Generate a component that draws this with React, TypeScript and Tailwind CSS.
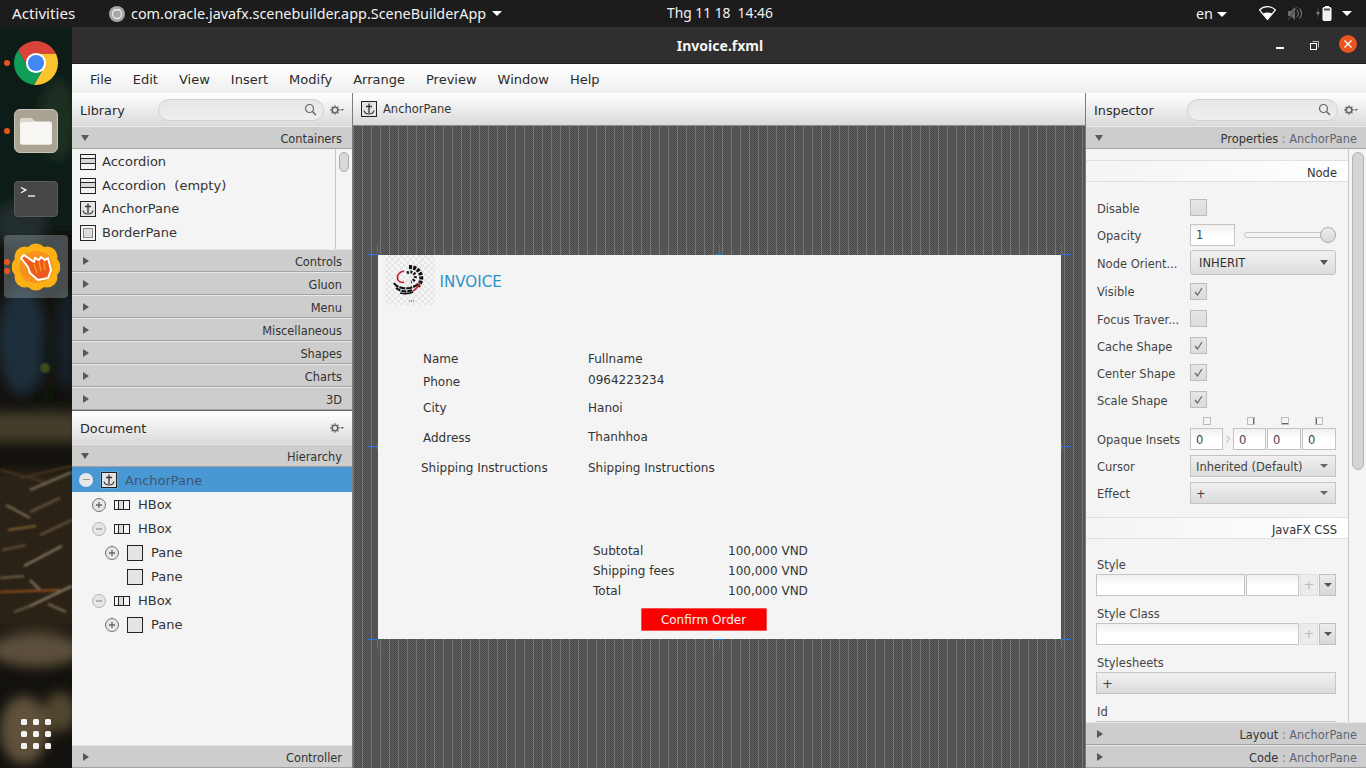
import type { ReactNode } from 'react';

const UI_FONT = "font-['DejaVu_Sans',sans-serif]";
const SHELL_FONT = "font-['Noto_Sans',sans-serif]";

function ChromeLogo() {
  return (
    <svg width="44" height="44" viewBox="0 0 48 48">
      <defs>
        <clipPath id="chromeClip">
          <circle cx="24" cy="24" r="24" />
        </clipPath>
      </defs>
      <g clipPath="url(#chromeClip)">
        <polygon points="24,24 24,14 60,14 60,-10 -10,-10 0.34,3.02 15.34,29" fill="#d9433a" />
        <polygon points="24,24 32.66,29 17.66,55 60,60 60,14 24,14" fill="#fbc42f" />
        <polygon points="24,24 15.34,29 0.34,3.02 -10,-10 -10,60 17.66,55 32.66,29" fill="#109d58" />
      </g>
      <circle cx="24" cy="24" r="11" fill="#fff" />
      <circle cx="24" cy="24" r="8.8" fill="#4386f5" />
    </svg>
  );
}

function FilesIcon() {
  return (
    <div className="flex h-[44px] w-[44px] items-center justify-center rounded-[6px] border border-[#c9c5b6] bg-[#a8a393]">
      <svg width="34" height="30" viewBox="0 0 32 28">
        <path d="M1 4a2 2 0 0 1 2-2h9l3 3h14a2 2 0 0 1 2 2v18a2 2 0 0 1-2 2H3a2 2 0 0 1-2-2z" fill="#f7f6f3" />
        <path d="M1 4a2 2 0 0 1 2-2h9l3 3-14 1z" fill="#d9d6cb" />
      </svg>
    </div>
  );
}

function TerminalIcon() {
  return (
    <div className="h-[36px] w-[44px] rounded-[4px] border border-[#5c5c5c] bg-[#474747] pl-[5px] pt-[4px]">
      <svg width="16" height="12" viewBox="0 0 16 12">
        <path d="M1 1.5l5 2.6-5 2.6" fill="none" stroke="#fff" strokeWidth="1.2" />
        <path d="M8 10h7" stroke="#fff" strokeWidth="1.3" />
      </svg>
    </div>
  );
}

function SceneBuilderLogo() {
  const lobes = [
    [24, 11],
    [35, 14],
    [38, 24],
    [35, 34],
    [24, 37],
    [13, 34],
    [10, 24],
    [13, 14],
  ];
  return (
    <svg width="48" height="48" viewBox="0 0 48 48">
      {lobes.map(([x, y], i) => (
        <circle key={i} cx={x} cy={y} r="10.500" fill="#fbb116" />
      ))}
      {lobes.map(([x, y], i) => (
        <circle key={i} cx={(x + 24) / 2} cy={(y + 24) / 2} r="10" fill="#f78f20" opacity="0.75" />
      ))}
      <path
        d="M9 15l3-3 10 7 1-4 4 2 2-3 4 3 3-2 3 12-3 8-10 2-8-7-2-6z"
        fill="#ee5a1e"
        stroke="#fff"
        strokeWidth="2"
        strokeLinejoin="round"
      />
      <path d="M22 21l3 9M27 19l2 9M32 18l1 9" stroke="#f9a01c" strokeWidth="1.300" />
    </svg>
  );
}

function Wallpaper() {
  const straws = [
    [0, 470, 45, 482, '#4b3a24'],
    [20, 478, 72, 466, '#4a3a24'],
    [30, 490, 72, 472, '#8a7c62'],
    [6, 505, 30, 518, '#8d7f62'],
    [30, 512, 60, 498, '#6e604a'],
    [8, 530, 36, 526, '#8a6c36'],
    [40, 535, 72, 520, '#6d5c42'],
    [2, 550, 26, 545, '#6a5a40'],
    [24, 566, 62, 546, '#a0937a'],
    [0, 578, 24, 576, '#7a6a50'],
    [30, 580, 40, 590, '#8f8268'],
    [0, 592, 60, 590, '#a0521e'],
    [30, 606, 72, 586, '#9a8c72'],
    [48, 604, 66, 612, '#7f7158'],
    [14, 612, 30, 606, '#6f624c'],
  ];
  return (
    <svg className="absolute inset-0" width="72" height="741" viewBox="0 27 72 741">
      <defs>
        <filter id="wallBlur">
          <feGaussianBlur stdDeviation="6" />
        </filter>
        <filter id="strawBlur">
          <feGaussianBlur stdDeviation="1.100" />
        </filter>
      </defs>
      <rect x="0" y="27" width="72" height="741" fill="#13110d" />
      <g filter="url(#wallBlur)">
        <rect x="-10" y="20" width="90" height="210" fill="#101d15" />
        <ellipse cx="58" cy="120" rx="18" ry="40" fill="#1c2d22" />
        <ellipse cx="20" cy="225" rx="26" ry="22" fill="#232f2e" />
        <ellipse cx="22" cy="340" rx="24" ry="55" fill="#1d2d3a" />
        <ellipse cx="66" cy="340" rx="10" ry="50" fill="#162229" />
        <ellipse cx="46" cy="370" rx="5" ry="40" fill="#0e1510" />
        <rect x="-10" y="412" width="90" height="30" fill="#453c2c" />
        <rect x="-10" y="470" width="90" height="160" fill="#2a2114" />
        <ellipse cx="36" cy="650" rx="46" ry="17" fill="#5c503a" />
        <ellipse cx="24" cy="730" rx="24" ry="34" fill="#5e513a" />
        <ellipse cx="60" cy="712" rx="16" ry="20" fill="#51472f" />
      </g>
      <circle cx="45" cy="368" r="5" fill="#3c4d1e" filter="url(#strawBlur)" />
      <g filter="url(#strawBlur)" opacity="0.75">
        {straws.map(([x1, y1, x2, y2, c], i) => (
          <line key={i} x1={x1} y1={y1} x2={x2} y2={y2} stroke={c as string} strokeWidth="2.500" />
        ))}
      </g>
    </svg>
  );
}

function Dock() {
  return (
    <div className="relative h-full w-[72px] shrink-0 overflow-hidden">
      <Wallpaper />
      <div className="relative flex h-full flex-col items-center pt-[14px]">
        <ChromeLogo />
        <div className="mt-[24px]">
          <FilesIcon />
        </div>
        <div className="mt-[28px]">
          <TerminalIcon />
        </div>
        <div className="mt-[18px] flex h-[63px] w-[64px] items-center justify-center rounded-[4px] bg-[#8a9aa0]/45">
          <SceneBuilderLogo />
        </div>
        <div className="mt-[421px] grid grid-cols-3 gap-[6px]">
          {Array.from({ length: 9 }).map((_, i) => (
            <div key={i} className="h-[6px] w-[6px] rounded-[1.5px] bg-[#f4f4f4]" />
          ))}
        </div>
      </div>
      <div className="absolute left-[4px] top-[33px] h-[6px] w-[6px] rounded-full bg-[#e95420]" />
      <div className="absolute left-[4px] top-[101px] h-[6px] w-[6px] rounded-full bg-[#e95420]" />
      <div className="absolute left-[4px] top-[232px] h-[6px] w-[6px] rounded-full bg-[#e95420]" />
      <div className="absolute left-[4px] top-[241px] h-[6px] w-[6px] rounded-full bg-[#e95420]" />
    </div>
  );
}

function Caret({ className = 'border-t-white' }: { className?: string }) {
  return <span className={`inline-block h-0 w-0 border-x-[5px] border-t-[5px] border-x-transparent ${className}`} />;
}

function TopBar() {
  return (
    <div className={`relative flex h-[27px] shrink-0 items-center bg-[#1c1c1c] text-[14.400px] text-[#f2f2f2] ${SHELL_FONT}`}>
      <span className="ml-[12px] w-[63px] whitespace-nowrap text-[15.200px]">Activities</span>
      <svg className="ml-[34px]" width="16" height="16" viewBox="0 0 16 16">
        <circle cx="8" cy="8" r="8" fill="#a6a6a6" />
        <circle cx="8" cy="8" r="4.5" fill="none" stroke="#e8e8e8" strokeWidth="1.3" />
        <path d="M5 3l2 2M11 3L9 5" stroke="#e8e8e8" strokeWidth="1" />
      </svg>
      <span className="ml-[6px]">com.oracle.javafx.scenebuilder.app.SceneBuilderApp</span>
      <Caret className="ml-[6px] border-t-white" />
      <span className="absolute left-[667px] text-[13.800px]">Thg 11 18&nbsp;&nbsp;14:46</span>
      <span className="absolute left-[1196px]">en</span>
      <Caret className="absolute left-[1217px] top-[12px] border-t-white" />
      <svg className="absolute left-[1259px] top-[6px]" width="17" height="14" viewBox="0 0 17 14">
        <path d="M8.5 13.5L.5 4C5-.4 12-.4 16.5 4z" fill="none" stroke="#fff" strokeWidth="1.2" />
        <path d="M8.5 13L4 7.6c2.6-1.6 6.4-1.6 9 0z" fill="#fff" />
      </svg>
      <svg className="absolute left-[1287px] top-[6px]" width="16" height="15" viewBox="0 0 16 15">
        <path d="M1 5h3l4-4v13l-4-4H1z" fill="#6c6c6c" />
        <path d="M10 4c1.5 2 1.5 5 0 7M12.5 2.5c2.500 3 2.500 7 0 10" fill="none" stroke="#6c6c6c" strokeWidth="1.2" />
        <path d="M1 14L10 1" stroke="#4a4a4a" strokeWidth="1.2" />
      </svg>
      <svg className="absolute left-[1315px] top-[5px]" width="17" height="16" viewBox="0 0 17 16">
        <path d="M4 3L1 9h2l-1 4 3-6H3z" fill="#7a7a7a" />
        <rect x="8" y="2.500" width="8" height="13" rx="1" fill="#f2f2f2" stroke="#fff" />
        <rect x="10" y="1" width="4" height="2" fill="#fff" />
        <rect x="9" y="3.500" width="6" height="2" fill="#555" />
      </svg>
      <Caret className="absolute left-[1342px] top-[11px] border-t-white" />
    </div>
  );
}

function TitleBar() {
  return (
    <div className={`relative flex h-[37px] shrink-0 items-center justify-center border-b border-[#1f1e1e] bg-[#302e2e] text-[14px] font-bold text-[#f5f5f5] ${SHELL_FONT}`}>
      <span className="ml-[2px]">Invoice.fxml</span>
      <div className="absolute left-[1204px] top-[20px] h-[1.500px] w-[8px] bg-white" />
      <svg className="absolute left-[1238px] top-[14px]" width="9" height="9" viewBox="0 0 9 9">
        <path d="M2.500 .5h6v6" fill="none" stroke="#bbb" />
        <rect x=".5" y="2.500" width="6" height="6" fill="none" stroke="#fff" />
      </svg>
      <svg className="absolute left-[1267px] top-[8px]" width="18" height="18" viewBox="0 0 18 18">
        <circle cx="9" cy="9" r="9" fill="#e95420" />
        <path d="M5.500 5.500l7 7M12.500 5.500l-7 7" stroke="#fff" strokeWidth="1.300" />
      </svg>
    </div>
  );
}

function MenuBar() {
  const items = ['File', 'Edit', 'View', 'Insert', 'Modify', 'Arrange', 'Preview', 'Window', 'Help'];
  return (
    <div className="flex h-[29px] shrink-0 items-center gap-[21px] bg-linear-to-b from-white to-[#efefef] pl-[18px] pt-[2px] text-[13px] text-[#2b2b2b]">
      {items.map((m) => (
        <span key={m}>{m}</span>
      ))}
    </div>
  );
}

function SearchField({ className }: { className: string }) {
  return (
    <div className={`flex h-[22px] items-center justify-end rounded-full border border-[#d2d2d2] bg-linear-to-b from-[#e6e6e6] to-[#efefef] pr-[6px] ${className}`}>
      <svg width="13" height="13" viewBox="0 0 13 13">
        <circle cx="5.500" cy="5.500" r="4" fill="none" stroke="#666" strokeWidth="1.200" />
        <path d="M8.500 8.500l3.500 3.500" stroke="#666" strokeWidth="1.500" />
      </svg>
    </div>
  );
}

function Gear() {
  return (
    <svg width="14" height="10" viewBox="0 0 14 10">
      <circle cx="5" cy="5" r="2.800" fill="none" stroke="#666" strokeWidth="1.600" />
      <path d="M5 .2v1.600M5 8.200v1.600M.2 5h1.600M8.200 5h1.600M1.600 1.600l1.100 1.100M7.300 7.300l1.100 1.100M1.600 8.400l1.100-1.100M7.300 2.700l1.100-1.100" stroke="#666" strokeWidth="1.300" />
      <path d="M10.500 4h3.500l-1.750 2z" fill="#666" />
    </svg>
  );
}

function PanelHeader({ title, titleWidth, children }: { title: string; titleWidth: string; children?: ReactNode }) {
  return (
    <div className="flex h-[33px] shrink-0 items-center bg-linear-to-b from-white to-[#dadada] pl-[8px] text-[12.800px] text-[#2b2b2b]">
      <span className={`pt-[2px] ${titleWidth}`}>{title}</span>
      {children}
    </div>
  );
}

function SectionBar({ title, owner, open = false }: { title: string; owner?: string; open?: boolean }) {
  return (
    <div className={`flex h-[23px] shrink-0 items-center justify-between border-y border-t-[#e9e9e9] border-b-[#a3a3a3] bg-[#cdcdcd] pl-[9px] text-[11.400px] text-[#333] ${owner ? 'pr-[9px]' : 'pr-[10px]'}`}>
      {open ? (
        <span className="h-0 w-0 border-x-[4px] border-t-[6px] border-x-transparent border-t-[#585858]" />
      ) : (
        <span className="ml-[2px] h-0 w-0 border-y-[4.500px] border-l-[6px] border-y-transparent border-l-[#585858]" />
      )}
      <span className="pt-[4px]">
        {title}
        {owner && (
          <>
            <span className="text-[#8a6f6f]"> : </span>
            <span className="text-[#5d6675]">{owner}</span>
          </>
        )}
      </span>
    </div>
  );
}

function IconBox({ children, bg = 'bg-[#e4e4e4]' }: { children?: ReactNode; bg?: string }) {
  return <span className={`flex h-[16px] w-[16px] shrink-0 items-center justify-center border border-[#222] ${bg}`}>{children}</span>;
}

function AccordionIcon() {
  return (
    <span className="flex h-[16px] w-[16px] shrink-0 flex-col border border-[#222] bg-[#f4f4f4]">
      <span className="h-[4px] border-b border-[#222]" />
      <span className="h-[5px] border-b border-[#222] bg-[#d8d8d8]" />
    </span>
  );
}

function AnchorGlyph() {
  return (
    <svg width="12" height="12" viewBox="0 0 12 12">
      <path d="M6 .5v9.500M3 3.500h6" fill="none" stroke="#333" strokeWidth="1.300" />
      <path d="M1 7.500c.5 2.500 2.500 3.500 5 3.500s4.500-1 5-3.500" fill="none" stroke="#333" strokeWidth="1.200" />
    </svg>
  );
}

function BorderPaneIcon() {
  return (
    <span className="flex h-[16px] w-[16px] shrink-0 items-center justify-center border border-[#222] bg-[#f4f4f4]">
      <span className="h-[10px] w-[10px] border border-[#888] bg-[#ddd]" />
    </span>
  );
}

function HBoxIcon() {
  return (
    <span className="flex h-[10px] w-[16px] shrink-0 border border-[#222] bg-[#f4f4f4]">
      <span className="w-[4px] border-r border-[#222]" />
      <span className="w-[5px] border-r border-[#222] bg-[#ddd]" />
    </span>
  );
}

function Toggle({ open }: { open: boolean }) {
  return (
    <span className={`flex h-[14px] w-[14px] shrink-0 items-center justify-center rounded-full border bg-[#e6e6e6] ${open ? 'border-[#b5b5b5]' : 'border-[#707070]'}`}>
      <svg width="8" height="8" viewBox="0 0 8 8">
        <path d={open ? 'M1 4h6' : 'M1 4h6M4 1v6'} stroke={open ? '#999' : '#666'} strokeWidth="1.300" />
      </svg>
    </span>
  );
}

function LibraryRow({ icon, label }: { icon: ReactNode; label: string }) {
  return (
    <div className="flex h-[23.700px] shrink-0 items-center gap-[6px] pl-[8px] text-[13px] text-[#333]">
      {icon}
      <span className="whitespace-pre">{label}</span>
    </div>
  );
}

function TreeRow({ indent, toggle, icon, label }: { indent: string; toggle?: boolean; icon: ReactNode; label: string }) {
  return (
    <div className={`flex h-[24px] items-center text-[13px] text-[#333] ${indent}`}>
      <span className="flex w-[22px] shrink-0">{toggle !== undefined && <Toggle open={toggle} />}</span>
      <span className="flex w-[16px] shrink-0 justify-center">{icon}</span>
      <span className="ml-[8px]">{label}</span>
    </div>
  );
}

function LeftPanel() {
  return (
    <div className="flex h-full w-[281px] shrink-0 flex-col overflow-hidden border-r border-[#7c7c7c] bg-[#f4f4f4]">
      <PanelHeader title="Library" titleWidth="w-[78px]">
        <SearchField className="w-[166px]" />
        <span className="ml-[6px]">
          <Gear />
        </span>
      </PanelHeader>
      <SectionBar title="Containers" open />
      <div className="flex h-[100px] shrink-0 overflow-hidden">
        <div className="w-[264px] flex-col overflow-hidden border-r border-[#c8c8c8] pt-px">
          <LibraryRow icon={<AccordionIcon />} label="Accordion" />
          <LibraryRow icon={<AccordionIcon />} label="Accordion  (empty)" />
          <LibraryRow icon={<IconBox><AnchorGlyph /></IconBox>} label="AnchorPane" />
          <LibraryRow icon={<BorderPaneIcon />} label="BorderPane" />
          <LibraryRow icon={<AccordionIcon />} label="" />
        </div>
        <div className="flex-1 pl-[3px] pt-[3px]">
          <div className="h-[20px] w-[10px] rounded-[5px] border border-[#aaa] bg-[#d8d8d8]" />
        </div>
      </div>
      {['Controls', 'Gluon', 'Menu', 'Miscellaneous', 'Shapes', 'Charts', '3D'].map((s) => (
        <SectionBar key={s} title={s} />
      ))}
      <div className="h-px shrink-0 bg-[#666]" />
      <PanelHeader title="Document" titleWidth="w-auto">
        <span className="ml-auto mr-[8px]">
          <Gear />
        </span>
      </PanelHeader>
      <SectionBar title="Hierarchy" open />
      <div className="flex min-h-0 flex-1 flex-col">
        <div className="mb-px flex h-[25px] shrink-0 items-center bg-[#4a98d3] pl-[7px] text-[13px] text-[#3b5673]">
          <span className="flex w-[21px] shrink-0">
            <span className="flex h-[14px] w-[14px] items-center justify-center rounded-full bg-[#e8e8e8]">
              <span className="h-[1.500px] w-[7px] bg-[#999]" />
            </span>
          </span>
          <span className="flex h-[18px] w-[18px] shrink-0 items-center justify-center bg-[#5fa6da]">
            <IconBox>
              <AnchorGlyph />
            </IconBox>
          </span>
          <span className="ml-[7px] pt-[2px]">AnchorPane</span>
        </div>
        <TreeRow indent="pl-[20px]" toggle={false} icon={<HBoxIcon />} label="HBox" />
        <TreeRow indent="pl-[20px]" toggle icon={<HBoxIcon />} label="HBox" />
        <TreeRow indent="pl-[33px]" toggle={false} icon={<IconBox />} label="Pane" />
        <TreeRow indent="pl-[33px]" icon={<IconBox />} label="Pane" />
        <TreeRow indent="pl-[20px]" toggle icon={<HBoxIcon />} label="HBox" />
        <TreeRow indent="pl-[33px]" toggle={false} icon={<IconBox />} label="Pane" />
      </div>
      <SectionBar title="Controller" />
    </div>
  );
}

function InvoiceLogo() {
  return (
    <div className="ml-[7px] h-[50px] w-[50px] shrink-0 bg-[repeating-conic-gradient(#e6e6e6_0_25%,#f6f6f6_0_50%)] bg-[length:6px_6px]">
      <svg width="50" height="50" viewBox="0 0 50 50">
        <path d="M24 12c6 0 11 3 12 9 1 4-1 8-3 10" fill="none" stroke="#111" strokeWidth="4" strokeDasharray="3 1.200" />
        <path d="M22 18c3-2 7-1 8 2s-1 6-4 7" fill="none" stroke="#111" strokeWidth="3" strokeDasharray="2 1.500" />
        <path d="M9 28c3 5 10 6 16 5 3-1 6-2 8-4" fill="none" stroke="#111" strokeWidth="2.200" strokeDasharray="6 1" />
        <path d="M11 33c5 4 12 4 17 2" fill="none" stroke="#111" strokeWidth="2.200" strokeDasharray="5 1" />
        <path d="M15 38c4 1 9 1 13-1" fill="none" stroke="#111" strokeWidth="1.800" />
        <path d="M19 16c-5 1-8 5-6 9 1 2 4 3 6 2" fill="none" stroke="#c8161d" strokeWidth="1.500" />
        <path d="M35 27c-1 4-4 7-7 9" fill="none" stroke="#c8161d" strokeWidth="1.500" />
        <path d="M24 46h6" stroke="#444" strokeWidth="1.200" strokeDasharray="1 1" />
      </svg>
    </div>
  );
}

function InvoiceField({ label, value, box, labelClass = '', valueClass = '' }: { label: string; value: string; box: string; labelClass?: string; valueClass?: string }) {
  return (
    <div className={`flex ${box}`}>
      <span className={`w-[165px] shrink-0 ${labelClass}`}>{label}</span>
      <span className={valueClass}>{value}</span>
    </div>
  );
}

function Handle({ className }: { className: string }) {
  return <div className={`absolute bg-[#1e78f0] ${className}`} />;
}

function InvoiceCard() {
  return (
    <div className="relative h-[384px] w-[683px] bg-[#f4f4f4] text-[12px] leading-[16px] text-[#333]">
      <Handle className="left-[-10px] top-[-1px] h-px w-[10px]" />
      <Handle className="left-[-1px] top-[-10px] h-[10px] w-px" />
      <Handle className="right-[-10px] top-[-1px] h-px w-[10px]" />
      <Handle className="right-[-1px] top-[-10px] h-[10px] w-px" />
      <Handle className="left-[-10px] bottom-[-1px] h-px w-[10px]" />
      <Handle className="left-[-1px] bottom-[-10px] h-[10px] w-px" />
      <Handle className="right-[-10px] bottom-[-1px] h-px w-[10px]" />
      <Handle className="right-[-1px] bottom-[-10px] h-[10px] w-px" />
      <Handle className="left-[341px] top-[-10px] h-[10px] w-px" />
      <Handle className="left-[338px] top-[-1px] h-px w-[7px]" />
      <Handle className="left-[341px] bottom-[-10px] h-[10px] w-px" />
      <Handle className="left-[338px] bottom-[-1px] h-px w-[7px]" />
      <Handle className="left-[-10px] top-[191px] h-px w-[10px]" />
      <Handle className="left-[-1px] top-[188px] h-[7px] w-px" />
      <Handle className="right-[-10px] top-[191px] h-px w-[10px]" />
      <Handle className="right-[-1px] top-[188px] h-[7px] w-px" />
      <div className="flex h-[50px] items-center">
        <InvoiceLogo />
        <span className="ml-[5px] mt-[3px] text-[15.100px] text-[#2a93c9]">INVOICE</span>
      </div>
      <div className="pl-[45.500px] pt-[46px]">
        <InvoiceField label="Name" value="Fullname" box="h-[23px] items-start" />
        <InvoiceField label="Phone" value="0964223234" box="h-[26px] items-start" valueClass="-mt-[2px]" />
        <InvoiceField label="City" value="Hanoi" box="h-[30px] items-start" />
        <InvoiceField label="Address" value="Thanhhoa" box="h-[30px] items-start" valueClass="-mt-[1px]" />
        <InvoiceField label="Shipping Instructions" value="Shipping Instructions" box="-ml-[2px] items-start" valueClass="ml-[2px]" />
      </div>
      <div className="pl-[215.500px] pt-[65px] leading-[20px]">
        {[
          ['Subtotal', '100,000 VND'],
          ['Shipping fees', '100,000 VND'],
          ['Total', '100,000 VND'],
        ].map(([k, v]) => (
          <div key={k} className="flex h-[20px]">
            <span className="w-[135px]">{k}</span>
            <span>{v}</span>
          </div>
        ))}
      </div>
      <div className="ml-[263px] mt-[7px] flex h-[23px] w-[126px] items-center justify-center rounded-[1px] border border-[#f05050] bg-[#fb0000] text-[12px] text-[#f8f0f0]">
        Confirm Order
      </div>
    </div>
  );
}

function CenterPanel() {
  return (
    <div className="flex h-full w-[733px] shrink-0 flex-col border-r border-[#7c7c7c]">
      <div className="flex h-[33px] shrink-0 items-center gap-[6px] border-b border-[#8a8a8a] bg-linear-to-b from-white to-[#dadada] pl-[8px] text-[11.500px] text-[#333]">
        <IconBox>
          <AnchorGlyph />
        </IconBox>
        <span className="pt-[2px]">AnchorPane</span>
      </div>
      <div className="flex min-h-0 flex-1 items-center justify-center bg-[#555] bg-[repeating-linear-gradient(90deg,#757575_0,#757575_1px,transparent_1px,transparent_9px),repeating-conic-gradient(#4b4b4b_0_25%,#5e5e5e_0_50%)] [background-size:auto,2px_2px]">
        <InvoiceCard />
      </div>
    </div>
  );
}

function Field({ className = '', children }: { className?: string; children?: ReactNode }) {
  return (
    <div className={`flex h-[22px] items-center border border-[#c4c4c4] bg-linear-to-b from-[#f0f0f0] via-white to-white pl-[5px] pt-[3px] text-[11.500px] ${className}`}>
      {children}
    </div>
  );
}

function Combo({ label }: { label: string }) {
  return (
    <div className="flex h-[22px] items-center justify-between border border-[#c4c4c4] bg-linear-to-b from-[#f0f0f0] to-[#dcdcdc] pl-[5px] pr-[7px] text-[11.500px]">
      <span className="pt-[4px]">{label}</span>
      <span className="h-0 w-0 border-x-[4px] border-t-[4px] border-x-transparent border-t-[#666]" />
    </div>
  );
}

function Check({ checked = false }: { checked?: boolean }) {
  return (
    <div className="flex h-[17px] w-[17px] items-center justify-center border border-[#bdbdbd] bg-linear-to-b from-[#e6e6e6] to-[#dcdcdc]">
      {checked && (
        <svg width="11" height="11" viewBox="0 0 11 11">
          <path d="M2 6l2.500 3L9 2" fill="none" stroke="#666" strokeWidth="1.200" />
        </svg>
      )}
    </div>
  );
}

function FormRow({ label, height, children }: { label: string; height: string; children: ReactNode }) {
  return (
    <div className={`flex items-center ${height}`}>
      <span className="w-[93px] shrink-0 whitespace-nowrap pt-[4px]">{label}</span>
      <div className="min-w-0 flex-1">{children}</div>
    </div>
  );
}

function InsetMark({ side }: { side: string }) {
  return (
    <span className="flex h-[8px] w-[8px] border border-[#bbb]">
      <span className={`h-full w-full ${side}`} />
    </span>
  );
}

function SubHeader({ title }: { title: string }) {
  return (
    <div className="flex h-[22px] shrink-0 items-center justify-end border-y border-[#e0e0e0] bg-linear-to-r from-[#f4f4f4] to-white pr-[11px] pt-[5px] text-[11.500px] text-[#333]">
      {title}
    </div>
  );
}

function AddButtons() {
  return (
    <>
      <div className="flex h-[22px] w-[18px] shrink-0 items-center justify-center border border-[#e0e0e0] bg-[#ececec] text-[13px] text-[#bbb]">+</div>
      <div className="flex h-[22px] w-[17px] shrink-0 items-center justify-center border border-[#c0c0c0] bg-linear-to-b from-[#ececec] to-[#d8d8d8]">
        <span className="h-0 w-0 border-x-[4px] border-t-[4px] border-x-transparent border-t-[#555]" />
      </div>
    </>
  );
}

function RightPanel() {
  return (
    <div className="flex h-full min-w-0 flex-1 flex-col overflow-hidden bg-[#f4f4f4]">
      <PanelHeader title="Inspector" titleWidth="w-[93px]">
        <SearchField className="w-[151px]" />
        <span className="ml-[6px]">
          <Gear />
        </span>
      </PanelHeader>
      <SectionBar title="Properties" owner="AnchorPane" open />
      <div className="flex min-h-0 flex-1 overflow-hidden">
        <div className="flex w-[263px] shrink-0 flex-col overflow-hidden border-r border-[#c8c8c8] pt-[11px] text-[11.500px] text-[#444]">
          <SubHeader title="Node" />
          <div className="flex shrink-0 flex-col pl-[11px] pr-[12px] pt-[12px]">
            <FormRow label="Disable" height="h-[27px]"><Check /></FormRow>
            <FormRow label="Opacity" height="h-[27px]">
              <div className="flex items-center">
                <Field className="w-[45px]">1</Field>
                <div className="relative ml-[9px] h-[6px] w-[91px] rounded-full border border-[#c4c4c4] bg-[#f4f4f4]">
                  <div className="absolute right-[-2px] top-[-6px] h-[16px] w-[16px] rounded-full border border-[#aaa] bg-linear-to-b from-[#eee] to-[#d8d8d8]" />
                </div>
              </div>
            </FormRow>
            <FormRow label="Node Orient..." height="h-[29px]">
              <div className="flex h-[25px] items-center justify-between rounded-[3px] border border-[#c4c4c4] bg-linear-to-b from-[#f2f2f2] to-[#dcdcdc] pl-[8px] pr-[7px] text-[#333]">
                <span className="pt-[3px]">INHERIT</span>
                <span className="h-0 w-0 border-x-[4.500px] border-t-[5px] border-x-transparent border-t-[#555]" />
              </div>
            </FormRow>
            <FormRow label="Visible" height="h-[28px]"><Check checked /></FormRow>
            <FormRow label="Focus Traver..." height="h-[27px]"><Check /></FormRow>
            <FormRow label="Cache Shape" height="h-[27px]"><Check checked /></FormRow>
            <FormRow label="Center Shape" height="h-[27px]"><Check checked /></FormRow>
            <FormRow label="Scale Shape" height="h-[27px]"><Check checked /></FormRow>
            <div className="flex h-[15px] items-center pl-[106px]">
              <InsetMark side="" />
              <span className="ml-[36px]"><InsetMark side="border-r border-[#666]" /></span>
              <span className="ml-[26px]"><InsetMark side="border-b border-[#666]" /></span>
              <span className="ml-[26px]"><InsetMark side="border-l border-[#666]" /></span>
            </div>
            <FormRow label="Opaque Insets" height="h-[22px]">
              <div className="flex items-center">
                <Field className="w-[33px]">0</Field>
                <svg className="mx-[3px]" width="4" height="8" viewBox="0 0 4 8">
                  <path d="M.5.5L3.500 4 .5 7.500" fill="none" stroke="#aaa" />
                </svg>
                <Field className="w-[33px]">0</Field>
                <Field className="ml-[1px] w-[34px]">0</Field>
                <Field className="ml-[1px] w-[34px]">0</Field>
              </div>
            </FormRow>
            <div className="h-[5px]" />
            <FormRow label="Cursor" height="h-[22px]"><Combo label="Inherited (Default)" /></FormRow>
            <div className="h-[5px]" />
            <FormRow label="Effect" height="h-[22px]"><Combo label="+" /></FormRow>
          </div>
          <div className="h-[13px] shrink-0" />
          <SubHeader title="JavaFX CSS" />
          <div className="flex flex-col pl-[10px] pr-[12px] text-[#444]">
            <div className="mt-[16px] h-[16px] pl-px pt-[2px]">Style</div>
            <div className="mt-[3px] flex gap-px">
              <Field className="w-[150px]" />
              <Field className="w-[53px]" />
              <AddButtons />
            </div>
            <div className="mt-[8px] h-[16px] pl-px pt-[2px]">Style Class</div>
            <div className="mt-[3px] flex gap-px">
              <Field className="w-[204px]" />
              <AddButtons />
            </div>
            <div className="mt-[8px] h-[16px] pl-px pt-[2px]">Stylesheets</div>
            <div className="mt-[3px] flex h-[22px] items-center border border-[#c4c4c4] bg-linear-to-b from-[#f0f0f0] to-[#dcdcdc] pl-[5px] pt-[2px] text-[13px]">
              +
            </div>
            <div className="mt-[8px] h-[16px] pl-px pt-[2px]">Id</div>
            <div className="mt-[3px]">
              <Field />
            </div>
          </div>
        </div>
        <div className="flex-1 pl-[3px] pt-[3px]">
          <div className="h-[318px] w-[12px] rounded-[6px] border border-[#b5b5b5] bg-[#d4d4d4]" />
        </div>
      </div>
      <SectionBar title="Layout" owner="AnchorPane" />
      <SectionBar title="Code" owner="AnchorPane" />
    </div>
  );
}

export default function App() {
  return (
    <div className={`flex h-[768px] w-[1366px] flex-col overflow-hidden ${UI_FONT}`}>
      <TopBar />
      <div className="flex min-h-0 flex-1">
        <Dock />
        <div className="flex min-w-0 flex-1 flex-col">
          <TitleBar />
          <MenuBar />
          <div className="flex min-h-0 flex-1">
            <LeftPanel />
            <CenterPanel />
            <RightPanel />
          </div>
        </div>
      </div>
    </div>
  );
}
